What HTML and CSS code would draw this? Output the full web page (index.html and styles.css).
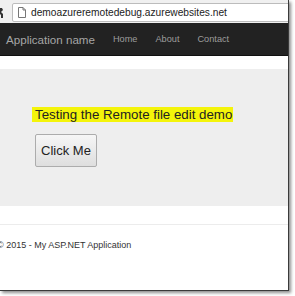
FILE: index.html
```html
<!DOCTYPE html>
<html>
<head>
<meta charset="utf-8">
<link rel="stylesheet" href="styles.css">
</head>
<body>
<div class="frame">
  <div class="chrome">
    <svg class="tool" width="6" height="12" viewBox="0 0 6 12"><path d="M0 1 L3 1 L4 3 L2 5 L4 7 L4 11 L2 11 L2 8 L0 6 Z" fill="#333"/></svg>
    <div class="address">
      <svg class="pageicon" width="8" height="11" viewBox="0 0 8 11"><path d="M0.5 0.5 H5 L7.5 3 V10.5 H0.5 Z M5 0.5 V3 H7.5" fill="#fff" stroke="#777" stroke-width="1"/></svg>
      <span class="url">demoazureremotedebug.azurewebsites.net</span>
    </div>
  </div>
  <nav class="navbar">
    <span class="brand">Application name</span>
    <span class="link">Home</span>
    <span class="link">About</span>
    <span class="link">Contact</span>
  </nav>
  <div class="spacer"></div>
  <section class="jumbo">
    <p class="lead"><span class="mark">Testing the Remote file edit demo</span></p>
    <button class="btn">Click Me</button>
  </section>
  <div class="gap"></div>
  <footer class="footer">
    <p class="copy">© 2015 - My ASP.NET Application</p>
  </footer>
</div>
</body>
</html>
```
FILE: styles.css
```css
html, body {
  margin: 0;
  padding: 0;
  background: #fff;
}
body {
  width: 295px;
  height: 296px;
  overflow: hidden;
  font-family: "Liberation Sans", Arial, sans-serif;
}
.frame {
  width: 288px;
  height: 290px;
  background: #fff;
  border-right: 1px solid #3a3a3a;
  border-bottom: 1px solid #3a3a3a;
  box-shadow: 2px 2px 3px rgba(0,0,0,0.45);
  overflow: hidden;
  display: flex;
  flex-direction: column;
}
.chrome {
  height: 23px;
  flex: none;
  background: #f0f0f0;
  display: flex;
  align-items: flex-start;
  box-sizing: border-box;
  padding-top: 3px;
}
.tool {
  margin-top: 4px;
  margin-left: -1px;
  margin-right: 7px;
}
.address {
  flex: 1;
  height: 19px;
  margin-right: -10px;
  background: #fff;
  border: 1px solid #bcbcbc;
  border-radius: 2px;
  box-sizing: border-box;
  display: flex;
  align-items: center;
  padding-left: 5px;
}
.pageicon {
  margin-right: 5px;
}
.url {
  font-family: "Liberation Sans", Arial, sans-serif;
  font-size: 10.2px;
  color: #222;
}
.navbar {
  height: 33px;
  flex: none;
  background: #222;
  border-bottom: 1px solid #101010;
  box-sizing: border-box;
  display: flex;
  align-items: center;
  padding-left: 6px;
  gap: 18px;
}
.brand {
  font-size: 11.6px;
  color: #a6a6a6;
}
.link {
  font-size: 9.2px;
  color: #9d9d9d;
}
.spacer {
  height: 13px;
  flex: none;
}
.jumbo {
  height: 137px;
  flex: none;
  background: #eee;
  box-sizing: border-box;
  padding: 38px 0 0 35px;
}
.lead {
  margin: 0;
  font-size: 13.3px;
  line-height: 15px;
  color: #333;
}
.mark {
  background: #f4f40a;
  color: #222;
  padding: 0 1px 0 3px;
  margin-left: -3px;
}
.btn {
  margin-top: 12px;
  width: 62px;
  height: 33px;
  font-family: "Liberation Sans", Arial, sans-serif;
  font-size: 13px;
  color: #222;
  background: linear-gradient(#f6f6f6, #dedede);
  border: 1px solid #acacac;
  border-radius: 2px;
  padding: 0;
}
.gap {
  height: 18px;
  flex: none;
}
.footer {
  border-top: 1px solid #ececec;
  flex: 1;
}
.copy {
  margin: 15px 0 0 -3px;
  font-size: 9px;
  color: #333;
}
```
